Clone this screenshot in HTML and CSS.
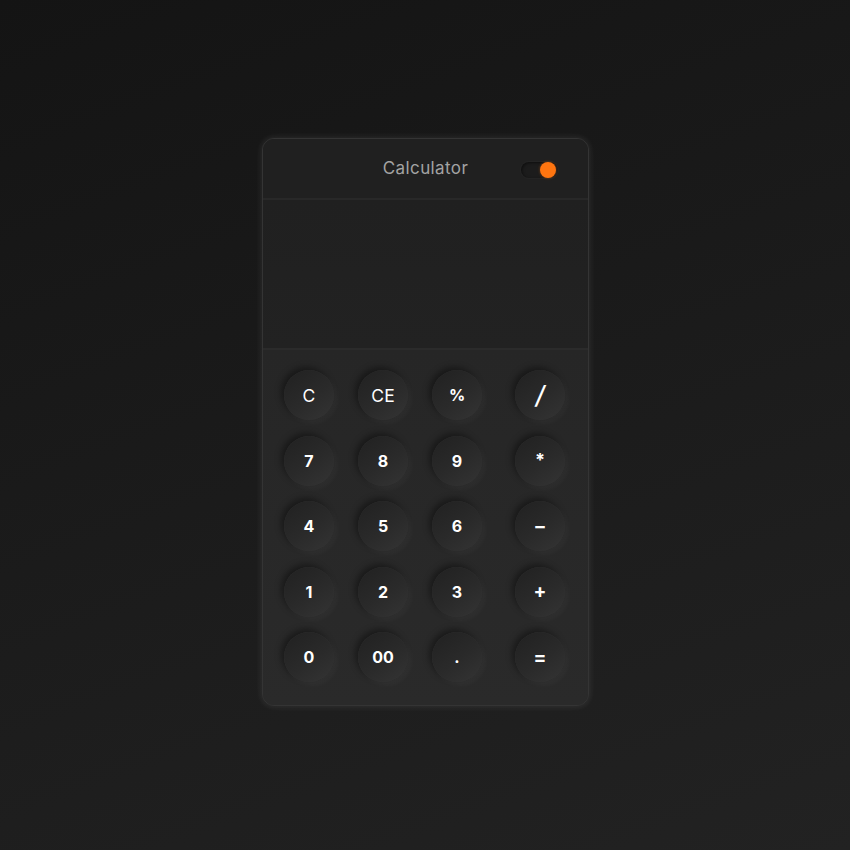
FILE: index.html
```html
<!DOCTYPE html>
<html lang="en">
<head>
<meta charset="utf-8">
<title>Calculator</title>
<link rel="stylesheet" href="styles.css">
</head>
<body>
<main class="page">
  <section class="calc">
    <header class="calc-head">
      <h1 class="title">Calculator</h1>
      <div class="toggle"><span class="knob"></span></div>
    </header>
    <div class="display"></div>
    <div class="keypad">
      <button class="key key-light">C</button>
      <button class="key key-light">CE</button>
      <button class="key">%</button>
      <button class="key op key-slash">/</button>
      <button class="key">7</button>
      <button class="key">8</button>
      <button class="key">9</button>
      <button class="key op key-star">*</button>
      <button class="key">4</button>
      <button class="key">5</button>
      <button class="key">6</button>
      <button class="key op key-sym">–</button>
      <button class="key">1</button>
      <button class="key">2</button>
      <button class="key">3</button>
      <button class="key op key-sym">+</button>
      <button class="key">0</button>
      <button class="key">00</button>
      <button class="key">.</button>
      <button class="key op key-sym">=</button>
    </div>
  </section>
</main>
</body>
</html>
```

FILE: styles.css
```css
* { box-sizing: border-box; }
html, body { margin: 0; padding: 0; }
body {
  width: 850px;
  height: 850px;
  background: linear-gradient(160deg, #141414 0%, #1b1b1b 50%, #222222 100%);
  font-family: "Inter", "Open Sans", "Liberation Sans", sans-serif;
}
.page {
  height: 850px;
  display: flex;
  justify-content: center;
  padding-top: 138px;
  padding-left: 1px;
}
.calc {
  width: 327px;
  height: 568px;
  border-radius: 12px;
  background: #262626;
  border: 1px solid #343434;
  box-shadow: 0 0 6px 1px rgba(255,255,255,0.07), 0 0 14px rgba(255,255,255,0.03);
  overflow: hidden;
  display: flex;
  flex-direction: column;
}
.calc-head {
  height: 61px;
  background: #202020;
  border-bottom: 2px solid #282828;
  display: flex;
  align-items: center;
  justify-content: center;
  position: relative;
}
.title {
  margin: 0;
  font-size: 17px;
  font-weight: 400;
  color: #a3a3a3;
  letter-spacing: 0.4px;
  padding-bottom: 1px;
}
.toggle {
  position: absolute;
  right: 30px;
  top: 23px;
  width: 37px;
  height: 16px;
  border-radius: 8px;
  background: #1c1c1c;
  box-shadow: inset 1px 1px 3px rgba(0,0,0,0.5), 0 0 2px rgba(255,255,255,0.08);
}
.knob {
  position: absolute;
  right: 2px;
  top: 0;
  width: 16px;
  height: 16px;
  border-radius: 50%;
  background: #ff7510;
  box-shadow: 0 0 3px rgba(255,120,20,0.4);
}
.display {
  height: 150px;
  background: linear-gradient(180deg, #202020, #222222);
  border-bottom: 2px solid #2b2b2b;
}
.keypad {
  flex: 1;
  display: grid;
  grid-template-columns: 50px 50px 50px 1fr;
  grid-auto-rows: 50px;
  column-gap: 24px;
  row-gap: 15.5px;
  padding: 20px 23px 0 21px;
  background: linear-gradient(180deg, #262626, #2a2a2a);
}
.key {
  width: 50px;
  height: 50px;
  border: none;
  border-radius: 50%;
  background: linear-gradient(145deg, #212121 0%, #2a2a2a 55%, #343434 100%);
  box-shadow: -3px -3px 6px rgba(0,0,0,0.38), 3px 3px 6px rgba(255,255,255,0.04), inset 0 0 1px rgba(255,255,255,0.06);
  color: #ffffff;
  font-family: "Inter", "Open Sans", "Liberation Sans", sans-serif;
  font-size: 16px;
  font-weight: 700;
  padding: 0;
  display: flex;
  align-items: center;
  justify-content: center;
}
.key-light {
  font-weight: 400;
  font-size: 17.5px;
}
.op { justify-self: end; }
.key-slash {
  font-size: 25px;
  font-weight: 500;
  font-style: italic;
}
.key-star {
  font-size: 18px;
  padding-bottom: 3px;
}
.key-sym {
  font-size: 19px;
}
```
